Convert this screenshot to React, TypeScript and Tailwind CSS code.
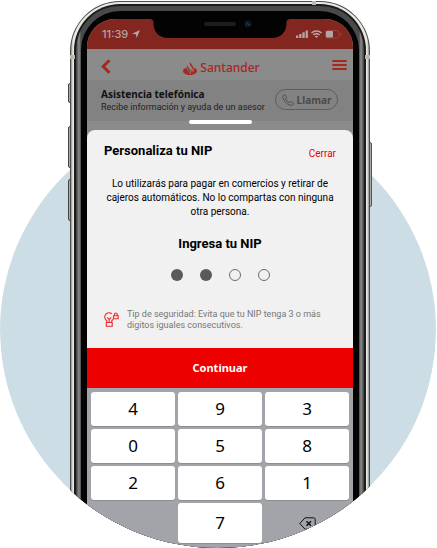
const keys = ["4", "9", "3", "0", "5", "8", "2", "6", "1"];

function StatusBar() {
  return (
    <div className="relative flex h-[30px] items-center justify-between bg-[#83261f] pr-[11px] pl-[15px] text-[#b4a5a3]">
      <div className="flex items-center gap-1">
        <span className="font-['Inter',sans-serif] text-[11px] leading-4 font-medium">11:39</span>
        <svg className="size-[8px]" viewBox="0 0 7 7" aria-hidden="true">
          <path d="M0 3.3 7 0 4 7 3.4 3.7Z" fill="currentColor" />
        </svg>
      </div>
      <svg className="absolute inset-x-0 top-0 mx-auto h-[20px] w-[142px]" viewBox="0 0 142 20" aria-hidden="true">
        <path d="M0 0H142C138.500 0 137.500 1 137.500 4C137.500 13 132 19 122 19H20C10 19 4.500 13 4.500 4C4.500 1 3.500 0 0 0Z" fill="#030303" />
        <rect x="55" y="3" width="32" height="4" rx="2" fill="#1d1d1d" />
        <circle cx="99" cy="5" r="3.500" fill="#111722" />
        <path d="M97.500 4.500 98.500 3.500M99.500 6 100.500 5M97.500 6H98" stroke="#2f5f9c" />
      </svg>
      <svg className="h-[10px] w-[46px]" viewBox="0 0 46 10" fill="none" aria-hidden="true">
        <path d="M0 6.500h2.300V9H0zM3.200 5h2.300v4H3.200zM6.400 3.300h2.300V9H6.400zM9.600 1.500h2.300V9H9.600z" fill="currentColor" />
        <path d="M15.500 4C18.200 1.300 22.800 1.300 25.500 4M17.400 6C19.200 4.300 21.800 4.300 23.600 6" stroke="currentColor" strokeWidth="1.700" />
        <path d="M18.800 7.400C19.800 6.400 21.200 6.400 22.200 7.400L20.500 9Z" fill="currentColor" />
        <rect x="29.500" y="1.500" width="13.500" height="7.500" rx="2.200" stroke="#9c4540" />
        <rect x="30" y="2" width="7" height="6.500" rx="1" fill="currentColor" />
        <path d="M45 4v2.500" stroke="#9c4540" />
      </svg>
    </div>
  );
}

function Header() {
  return (
    <header className="flex h-[31px] items-center justify-between bg-[#8b8b8b] pt-1 pr-[6px] pl-[14px] text-[#a6281f]">
      <button aria-label="Regresar">
        <svg className="h-[15px] w-[10px]" viewBox="0 0 10 15" fill="none" stroke="currentColor" strokeWidth="3">
          <path d="M8.500 1.200 2.200 7.500 8.500 13.800" />
        </svg>
      </button>
      <div className="flex items-center gap-[3px] pt-[3px]">
        <svg className="h-[13px] w-[14px]" viewBox="0 0 14 13" fill="currentColor" aria-hidden="true">
          <path d="M7 0C6.500 1 6.700 2.100 7.200 3L9.600 7C9.900 7.500 10 8 10 8.500L10.200 8.200C10.800 7.200 10.800 6 10.200 5L8 1.500C7.500 .9 7.100 .5 7 0ZM4.200 3.400C3.600 4.400 3.700 5.300 4.200 6.200L6.500 9.800C6.700 10.200 6.900 10.700 6.900 11.200L7.100 10.800C7.700 9.800 7.700 8.700 7.100 7.700L4.900 4.800C4.600 4.400 4.300 3.900 4.200 3.400ZM3.300 5.800C1.300 6.400 0 7.500 0 8.900C0 11.100 3.100 12.900 7 12.900S14 11.100 14 8.900C14 7.500 12.700 6.300 10.900 5.800C11.300 7.400 11 8.800 9.900 10.200C9.600 9 9.200 8 8.300 6.900C8.900 8.900 8.400 10.800 6.800 12.200C6.700 11 6.400 10.300 5.900 9.600L4.100 7.400C3.700 6.900 3.400 6.300 3.300 5.800Z" />
        </svg>
        <span className="font-['Noto_Sans',sans-serif] text-[12px] leading-4 font-medium">Santander</span>
      </div>
      <button aria-label="Menú" className="pb-[3px]">
        <svg className="h-[10px] w-[15px]" viewBox="0 0 15 10" stroke="currentColor" strokeWidth="1.800">
          <path d="M1 1h13M1 5h13M1 9h13" strokeLinecap="round" />
        </svg>
      </button>
    </header>
  );
}

function Assistance() {
  return (
    <section className="flex h-[41px] items-start justify-between bg-[#828282] pt-2 pr-[15px] pl-[14px]">
      <div>
        <h2 className="font-['Noto_Sans',sans-serif] text-[10px] leading-[13px] font-bold text-[#111]">Asistencia telefónica</h2>
        <p className="font-['Roboto',sans-serif] text-[9px] leading-[12px] text-[#1f1f1f]">Recibe información y ayuda de un asesor</p>
      </div>
      <button className="mt-px flex h-[21px] w-[63px] items-center justify-center gap-[3px] rounded-full border border-[#5d5d5d] text-[#4b4b4b]">
        <svg className="size-3" viewBox="0 0 12 12" fill="none" stroke="currentColor" strokeWidth=".9" aria-hidden="true">
          <path d="M2.300 .7C1 1.300 .5 2.200 .8 3.300C1.800 7.400 4.600 10.300 8.800 11.300C9.900 11.600 10.900 11.100 11.400 9.900C11.600 9.500 11.400 9.100 11.100 8.900L9.300 7.700C8.900 7.500 8.500 7.600 8.200 7.900L7.300 8.700C5.600 7.800 4.300 6.500 3.400 4.900L4.200 4.100C4.500 3.800 4.500 3.400 4.300 3L3.200 1C3 .7 2.700 .5 2.300 .7Z" />
        </svg>
        <span className="font-['Noto_Sans',sans-serif] text-[10px] leading-[14px] font-bold">Llamar</span>
      </button>
    </section>
  );
}

function PinSheet() {
  return (
    <main className="h-[218px] rounded-t-[8px] bg-[#f1f1f1] px-[17px] pt-3 font-['Roboto',sans-serif] text-black">
      <div className="flex items-start justify-between">
        <h1 className="text-[13px] leading-[18px] font-bold">Personaliza tu NIP</h1>
        <button className="pt-1 text-[10px] leading-[16px] text-[#ec0000]">Cerrar</button>
      </div>
      <p className="mt-[15px] text-center text-[10px] leading-[14px]">
        Lo utilizarás para pagar en comercios y retirar de cajeros automáticos. No lo compartas con ninguna otra persona.
      </p>
      <h2 className="mt-4 text-center text-[13px] leading-[18px] font-bold">Ingresa tu NIP</h2>
      <div role="img" aria-label="2 de 4 dígitos ingresados" className="mt-4 flex justify-center gap-[17px]">
        {[true, true, false, false].map((filled, i) => (
          <span key={i} className={filled ? "size-3 rounded-full bg-[#5a5a5a]" : "size-3 rounded-full border border-[#6c6c6c]"} />
        ))}
      </div>
      <div className="mt-7 flex gap-2 text-[#777]">
        <svg className="mt-[3px] size-[15px] shrink-0" viewBox="0 0 15 15" fill="none" stroke="#ee2a2a" strokeWidth="1.100" aria-hidden="true">
          <path d="M8 1.900A4.300 4.300 0 1 0 2.800 8.700V10.500M7.700 10.500V8.800A4.300 4.300 0 0 0 9.200 7M3.300 5.300 5.200 7.700 7.100 5.300M5.200 7.700V10.500M2.300 10.500H8.200V14.200H2.300Z" />
          <path d="M9.500 3.700H14.200V6.700H9.500ZM10.500 3.700V2.300A1.350 1.350 0 0 1 13.200 2.300V3.700" />
        </svg>
        <p className="w-[200px] text-[9px] leading-[11px]">
          Tip de seguridad: Evita que tu NIP tenga 3 o más digitos iguales consecutivos.
        </p>
      </div>
    </main>
  );
}

function Keypad() {
  const key = "rounded-[3px] bg-white text-[17px] shadow-[0_1px_0_#8c8e92]";
  return (
    <div className="grid grid-cols-3 gap-[3px] bg-[#a2a4a9] p-1 font-['Noto_Sans',sans-serif] text-black">
      {keys.map((k) => (
        <button key={k} className={`h-[34px] ${key}`}>{k}</button>
      ))}
      <button className={`col-start-2 h-[40px] ${key}`}>7</button>
      <button aria-label="Borrar" className="flex h-[40px] items-center justify-center">
        <svg className="h-[13px] w-[17px]" viewBox="0 0 17 13" fill="none" stroke="#111">
          <path d="M6 .8H14.500Q16.200 .8 16.200 2.500V10.500Q16.200 12.200 14.500 12.200H6L.8 6.500Z" />
          <path d="M7.500 4.200 12 8.800M12 4.200 7.500 8.800" strokeWidth="1.400" />
        </svg>
      </button>
    </div>
  );
}

export default function App() {
  return (
    <div className="bg-white">
      <div className="relative w-full max-w-[436px] overflow-hidden rounded-b-[218px] pl-1">
        <div className="absolute inset-x-0 bottom-0 h-[436px] rounded-full bg-[#cddde5]" />
        <div className="relative mx-auto mt-px w-full max-w-[304px] px-[2px]">
          <i className="absolute top-[82px] left-0 h-[20px] w-[3px] rounded-l-[2px] border border-[#444] bg-[#aaa]" />
          <i className="absolute top-[125px] left-0 h-[42px] w-[3px] rounded-l-[2px] border border-[#444] bg-[#aaa]" />
          <i className="absolute top-[178px] left-0 h-[42px] w-[3px] rounded-l-[2px] border border-[#444] bg-[#aaa]" />
          <i className="absolute top-[141px] right-0 h-[65px] w-[3px] rounded-r-[2px] border border-[#55534e] bg-[#aaa]" />
          <div className="relative rounded-t-[50px] bg-[#4c4c4a] px-px pt-px">
            <div className="rounded-t-[49px] bg-[linear-gradient(90deg,#8f8f8b_0,#e9e8e3_2px,#e9e8e3_calc(100%-2px),#8f8f8b_100%)] px-[3px] pt-[2px]">
              <div className="rounded-t-[46px] bg-[#1b1b1b] px-[2px] pt-[2px]">
                <div className="rounded-t-[44px] bg-[linear-gradient(90deg,#3c3c3c_0,#8c8c8c_3px,#4a4a4a_5px,#4a4a4a_50%,#4a4a4a_calc(100%-5px),#8c8c8c_calc(100%-3px),#3c3c3c_100%)] px-[5px] pt-[5px]">
                  <div className="rounded-t-[39px] bg-[#030303] px-[6px] pt-[8px]">
                    <div className="h-[529px] overflow-hidden rounded-t-[28px] bg-[#a2a4a9]">
                      <StatusBar />
                      <Header />
                      <Assistance />
                      <div className="bg-[#8b8b8b]">
                        <div className="relative h-[9px]">
                          <div className="absolute inset-x-0 -top-px mx-auto h-1 w-[63px] rounded-full bg-white" />
                        </div>
                        <PinSheet />
                      </div>
                      <button className="h-[40px] w-full bg-[#ec0000] font-['Noto_Sans',sans-serif] text-[11px] font-bold text-white">
                        Continuar
                      </button>
                      <Keypad />
                    </div>
                  </div>
                </div>
              </div>
            </div>
            <i className="absolute top-0 right-[54px] h-[4px] w-[4px] bg-[#b9b9b0]" />
            <i className="absolute top-[54px] left-0 h-[4px] w-[5px] bg-[#b9b9b0]" />
            <i className="absolute top-[54px] right-0 h-[4px] w-[5px] bg-[#b9b9b0]" />
          </div>
        </div>
      </div>
    </div>
  );
}
